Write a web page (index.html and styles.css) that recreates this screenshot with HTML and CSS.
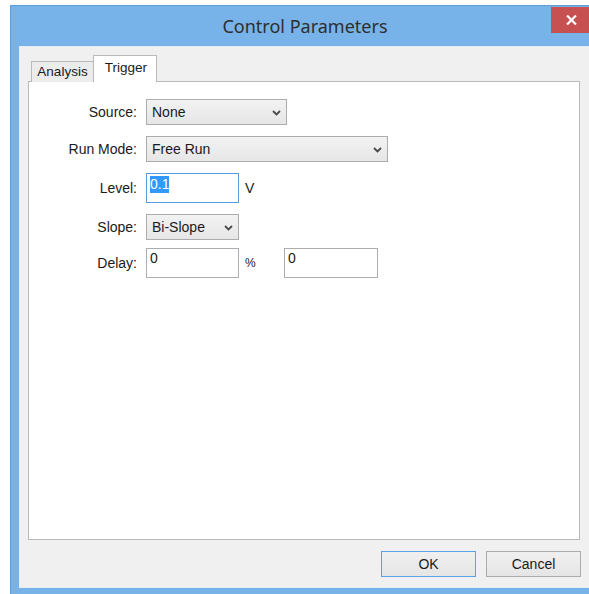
FILE: index.html
```html
<!DOCTYPE html>
<html lang="en">
<head>
<meta charset="utf-8">
<title>Control Parameters</title>
<link rel="stylesheet" href="styles.css">
</head>
<body>
<div class="window">
  <div class="titlebar">
    <span class="spacer"></span>
    <h1 class="title">Control Parameters</h1>
    <div class="close" title="Close">
      <svg width="11" height="10" viewBox="0 0 11 10" aria-hidden="true">
        <path d="M1 0.5 L10 9.5 M10 0.5 L1 9.5" stroke="#fff" stroke-width="2.2" fill="none"/>
      </svg>
    </div>
  </div>
  <div class="client">
    <div class="tabstrip">
      <div class="tab">Analysis</div>
      <div class="tab tab-active">Trigger</div>
    </div>
    <div class="panel">
      <div class="form">
        <label class="label">Source:</label>
        <div class="row">
          <div class="combo combo-source">
            <span>None</span>
            <svg class="chev" width="9" height="6" viewBox="0 0 9 6"><path d="M1 1 L4.5 4.5 L8 1" stroke="#4a4a4a" stroke-width="1.8" fill="none"/></svg>
          </div>
        </div>

        <label class="label">Run Mode:</label>
        <div class="row">
          <div class="combo combo-mode">
            <span>Free Run</span>
            <svg class="chev" width="9" height="6" viewBox="0 0 9 6"><path d="M1 1 L4.5 4.5 L8 1" stroke="#4a4a4a" stroke-width="1.8" fill="none"/></svg>
          </div>
        </div>

        <label class="label">Level:</label>
        <div class="row">
          <div class="textbox textbox-focus"><span class="sel">0.1</span></div>
          <span class="unit">V</span>
        </div>

        <label class="label">Slope:</label>
        <div class="row">
          <div class="combo combo-slope">
            <span>Bi-Slope</span>
            <svg class="chev" width="9" height="6" viewBox="0 0 9 6"><path d="M1 1 L4.5 4.5 L8 1" stroke="#4a4a4a" stroke-width="1.8" fill="none"/></svg>
          </div>
        </div>

        <label class="label tight">Delay:</label>
        <div class="row tight">
          <div class="textbox">0</div>
          <span class="unit unit-small">%</span>
          <div class="textbox textbox-wide">0</div>
        </div>
      </div>
    </div>
    <div class="buttons">
      <button class="btn btn-default">OK</button>
      <button class="btn">Cancel</button>
    </div>
  </div>
</div>
</body>
</html>
```

FILE: styles.css
```css
html, body {
  margin: 0;
  padding: 0;
}

body {
  width: 589px;
  height: 594px;
  overflow: hidden;
  background: #ffffff;
  font-family: "Liberation Sans", Arial, sans-serif;
  font-size: 14px;
  color: #1a1a1a;
}

/* Window frame */
.window {
  box-sizing: border-box;
  margin: 5px 0 0 10px;
  width: 590px;
  background: #77b3e8;
  border: 1px solid #5f9cd6;
  padding: 0 8px 6px 8px;
}

.titlebar {
  height: 40px;
  display: grid;
  grid-template-columns: 1fr auto 1fr;
  align-items: center;
}

.title {
  margin: 0;
  font-family: "Noto Sans", "Open Sans", sans-serif;
  font-weight: normal;
  font-size: 18px;
  color: #2e2e2e;
  padding-bottom: 1px;
}

.close {
  justify-self: end;
  align-self: start;
  margin-top: 1px;
  width: 40px;
  height: 26px;
  background: #c75050;
  display: flex;
  align-items: center;
  justify-content: center;
}

/* Client area */
.client {
  box-sizing: border-box;
  height: 542px;
  background: #f0f0f0;
  border: 1px solid #e4ecf5;
  display: flex;
  flex-direction: column;
}

.tabstrip {
  display: flex;
  align-items: flex-end;
  padding: 9px 0 0 11px;
  height: 26px;
  margin-bottom: -1px;
  position: relative;
  z-index: 1;
}

.tab {
  box-sizing: border-box;
  font-size: 13.5px;
  line-height: 16px;
  text-align: center;
  color: #1a1a1a;
}

.tab:first-child {
  width: 62px;
  height: 21px;
  background: #ececec;
  border: 1px solid #b9b9b9;
  border-right: none;
  border-bottom: none;
  padding-top: 2px;
}

.tab-active {
  width: 64px;
  height: 27px;
  background: #ffffff;
  border: 1px solid #b9b9b9;
  border-bottom: none;
  padding-top: 4px;
  padding-left: 2px;
}

.panel {
  flex: 1;
  margin: 0 10px 0 8px;
  background: #ffffff;
  border: 1px solid #b9b9b9;
}

.form {
  display: grid;
  grid-template-columns: 108px auto;
  column-gap: 9px;
  row-gap: 11px;
  padding-top: 17px;
  align-items: center;
  justify-items: start;
}

.label {
  justify-self: end;
  white-space: nowrap;
}

.tight {
  margin-top: -3px;
}

.row {
  display: flex;
  align-items: center;
}

/* Drop-down lists */
.combo {
  box-sizing: border-box;
  height: 26px;
  display: flex;
  align-items: center;
  justify-content: space-between;
  padding: 0 5px 0 5px;
  border: 1px solid #acacac;
  background: linear-gradient(#f2f2f2, #e6e6e6);
}

.combo-source { width: 141px; }
.combo-mode { width: 242px; }
.combo-slope { width: 93px; }

.chev {
  display: block;
  margin-top: 1px;
}

/* Text boxes */
.textbox {
  box-sizing: border-box;
  width: 93px;
  height: 30px;
  border: 1px solid #abadb3;
  background: #ffffff;
  padding: 1px 3px 0 3px;
  line-height: 17px;
}

.textbox-wide { width: 94px; }

.textbox-focus {
  border-color: #569de5;
  padding-top: 2px;
}

.sel {
  background: #3399ff;
  color: #ffffff;
  display: inline-block;
  line-height: 17px;
}

.unit {
  box-sizing: border-box;
  width: 45px;
  padding-left: 6px;
}

.unit-small {
  font-size: 12px;
}

/* Dialog buttons */
.buttons {
  display: flex;
  justify-content: flex-end;
  gap: 10px;
  margin: 11px 9px 10px 0;
}

.btn {
  box-sizing: border-box;
  width: 95px;
  height: 26px;
  margin: 0;
  padding: 0;
  font-family: "Liberation Sans", Arial, sans-serif;
  font-size: 14px;
  color: #1a1a1a;
  border: 1px solid #acacac;
  background: linear-gradient(#f0f0f0, #e5e5e5);
}

.btn-default {
  border-color: #5aa3ea;
}
```
